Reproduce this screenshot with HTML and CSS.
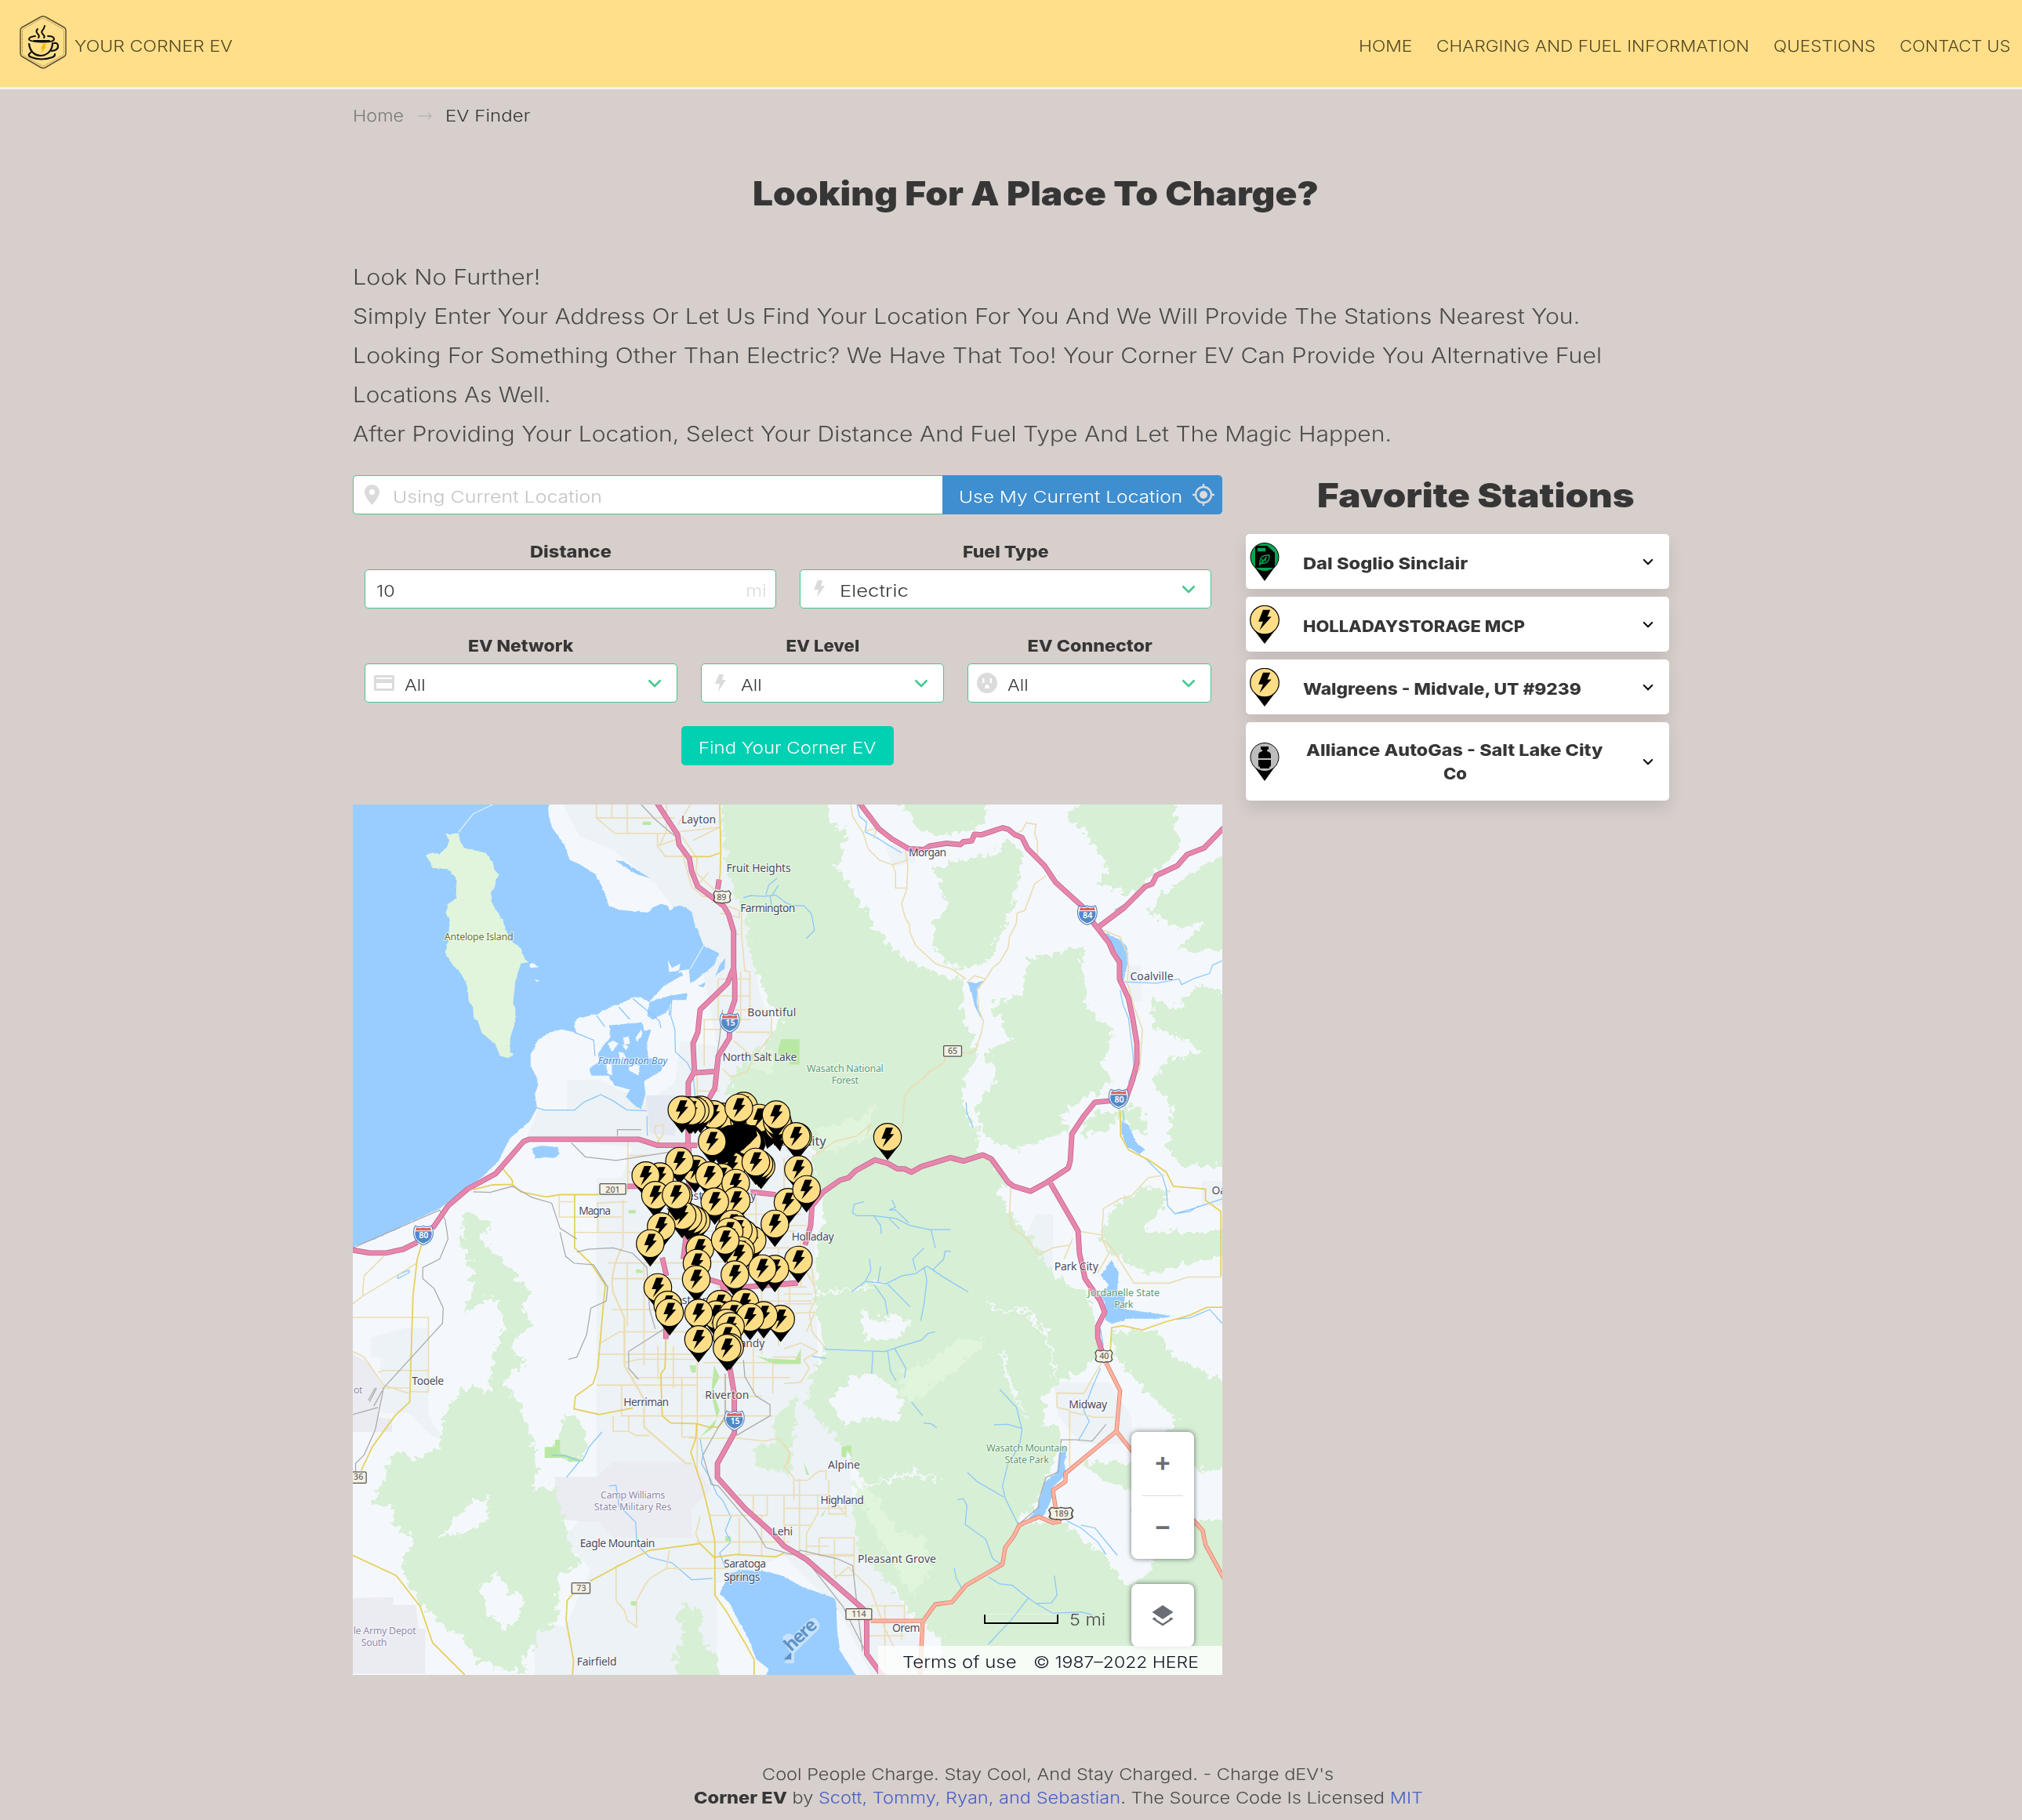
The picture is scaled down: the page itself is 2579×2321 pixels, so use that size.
FILE: index.html
```html
<!DOCTYPE html>
<html lang="en">
<head>
<meta charset="utf-8">
<title>Your Corner EV</title>
<link rel="stylesheet" href="styles.css">
</head>
<body>
<svg width="0" height="0" class="defs">
  <defs>
    <symbol id="bolt" viewBox="0 0 14 22"><path d="M5 0h6L9 7h5L4 22l2-10H0z"/></symbol>
    <symbol id="chev" viewBox="0 0 18 11"><path d="M1.5 1.5 9 9l7.500-7.500" fill="none" stroke="currentColor" stroke-width="2.600"/></symbol>
    <g id="pin"><path d="M-40 36 0 88 40 36z"/><circle r="53" fill="#fedd87" stroke="#000" stroke-width="3.500"/><path d="M-6-37h27L10-12h15L-19 38-6 6h-17z"/></g>
    <g id="interstate"><path d="M-28-34Q-14-26 0-34 14-26 28-34 38-20 33 4 26 26 0 35-26 26-33 4-38-20-28-34z" fill="#fff" stroke="#4d80bd" stroke-width="3"/><path d="M-29-14H29Q32-2 27 8 20 22 0 29-20 22-27 8-32-2-29-14z" fill="#5288c7"/><path d="M-25-28Q-13-22 0-28 13-22 25-28l3 11h-56z" fill="#dc5f62"/></g>
    <g id="usroute"><path d="M-24-22Q-12-16 0-22 12-16 24-22L31-12Q24 0 30 12 24 22 12 20 4 20 0 23-4 20-12 20-24 22-30 12-24 0-31-12z" fill="#f5f1e6" stroke="#4a4a44" stroke-width="3.500"/></g>
  </defs>
</svg>
<header class="navbar">
  <a class="brand">
    <svg class="logo" width="60" height="68" viewBox="0 0 60 68" fill="none" stroke="#111" stroke-linecap="round">
      <path d="M27 1.500Q30 0 33 1.500L57 15Q59 16 59 19V48Q59 51 57 52L33 66Q30 67.500 27 66L3 52Q1 51 1 48V19Q1 16 3 15z" stroke="#5d502f" stroke-width="1.500"/>
      <path d="M27.500 4.200Q30 3 32.500 4.200L55 16.800Q56.500 18 56.500 20V47.500Q56.500 49.500 55 50.500L32.500 63.300Q30 64.500 27.500 63.300L5 50.500Q3.500 49.500 3.500 47.500V20Q3.500 18 5 16.800z" stroke="#8b7846" stroke-dasharray=".5 2" stroke-width="1"/>
      <path d="M23 17q-3 3 0 6t1 5M32 13q-1 4-3 6t1 5 1 4" stroke-width="2"/>
      <path d="M20 26q-8 1-8 4t16 3.500 16-3.500-8-4" stroke-width="2"/>
      <path d="M12 36q1 8 6 12 4 3 9 3t10-4q5-5 5-12M44 35q5-1 5 4t-8 6M14 47q-5 4 1 6 6 2.500 13 2.500T42 53q3-1 3-4" stroke-width="2.200"/>
      <path d="M18 32h20" stroke-width="2"/>
      <path d="M30 36h4l-2 4h2l-7 8 2-6h-2z" fill="#f6b800" stroke="none"/>
    </svg>
    <span class="wide t-brand">YOUR CORNER EV</span>
  </a>
  <nav class="menu"><a class="wide n1">HOME</a><a class="wide n2">CHARGING AND FUEL INFORMATION</a><a class="wide n3">QUESTIONS</a><a class="wide n4">CONTACT US</a></nav>
</header>
<main class="container">
  <div class="breadcrumb"><a class="wide b1">Home</a><svg width="20" height="10" viewBox="0 0 20 10" fill="none" stroke="#b9b5b4" stroke-width="1.300"><path d="M1 5h17M14 1l4 4-4 4"/></svg><span class="wide b2">EV Finder</span></div>
  <h1><span class="wide t-title">Looking For A Place To Charge?</span></h1>
  <div class="intro">
    <p><span class="wide p1">Look No Further!</span></p>
    <p><span class="wide p2">Simply Enter Your Address Or Let Us Find Your Location For You And We Will Provide The Stations Nearest You.</span></p>
    <p><span class="wide p3">Looking For Something Other Than Electric? We Have That Too! Your Corner EV Can Provide You Alternative Fuel</span></p>
    <p><span class="wide p4">Locations As Well.</span></p>
    <p><span class="wide p5">After Providing Your Location, Select Your Distance And Fuel Type And Let The Magic Happen.</span></p>
  </div>
  <div class="columns">
    <section class="finder">
      <div class="search">
        <div class="address"><svg width="19" height="26" viewBox="0 0 19 26" fill="#dbdbdb"><path fill-rule="evenodd" d="M9.500 0A9.500 9.500 0 0 1 19 9.500C19 16 9.500 26 9.500 26S0 16 0 9.500A9.500 9.500 0 0 1 9.500 0zm0 6a3.500 3.500 0 1 0 0 7 3.500 3.500 0 0 0 0-7z"/></svg><span class="wide ph">Using Current Location</span></div>
        <button class="locate"><span class="wide t-loc">Use My Current Location</span><svg width="28" height="28" viewBox="0 0 28 28" fill="none" stroke="#dbdbdb" stroke-width="2.400"><circle cx="14" cy="14" r="10"/><circle cx="14" cy="14" r="5" fill="#dbdbdb" stroke="none"/><path d="M14 0v4M14 24v4M0 14h4M24 14h4"/></svg></button>
      </div>
      <div class="row row-2">
        <label class="field"><b class="wide l1">Distance</b><span class="control"><span class="wide v-10">10</span><em class="wide unit">mi</em></span></label>
        <label class="field"><b class="wide l2">Fuel Type</b><span class="control"><svg class="ic" width="14" height="22"><use href="#bolt"/></svg><span class="wide v v-el">Electric</span><svg class="ch" width="18" height="11"><use href="#chev"/></svg></span></label>
      </div>
      <div class="row row-3">
        <label class="field"><b class="wide l3">EV Network</b><span class="control"><svg class="ic" width="26" height="20" viewBox="0 0 26 20"><path fill-rule="evenodd" d="M2 0h22a2 2 0 0 1 2 2v16a2 2 0 0 1-2 2H2a2 2 0 0 1-2-2V2A2 2 0 0 1 2 0zm1 3v2h20V3zm0 7v7h20v-7z"/></svg><span class="wide v">All</span><svg class="ch" width="18" height="11"><use href="#chev"/></svg></span></label>
        <label class="field"><b class="wide l4">EV Level</b><span class="control"><svg class="ic" width="14" height="22"><use href="#bolt"/></svg><span class="wide v">All</span><svg class="ch" width="18" height="11"><use href="#chev"/></svg></span></label>
        <label class="field"><b class="wide l5">EV Connector</b><span class="control"><svg class="ic" width="26" height="26" viewBox="0 0 26 26"><path fill-rule="evenodd" d="M13 0a13 13 0 1 1 0 26 13 13 0 0 1 0-26zM7 7v6h2.500V7zm9.500 0v6H19V7zM10.500 20h5v-2.500a2.500 2.500 0 0 0-5 0z"/></svg><span class="wide v">All</span><svg class="ch" width="18" height="11"><use href="#chev"/></svg></span></label>
      </div>
      <button class="submit"><span class="wide t-sub">Find Your Corner EV</span></button>
      <div class="map">
<svg class="map-art" viewBox="0 17 3105 3108" preserveAspectRatio="none">
  <defs>
    <filter id="rough" x="-5%" y="-5%" width="110%" height="110%"><feTurbulence type="fractalNoise" baseFrequency=".04" numOctaves="4" seed="4"/><feDisplacementMap in="SourceGraphic" scale="60" xChannelSelector="R" yChannelSelector="G"/></filter>
    <filter id="shore" x="-5%" y="-5%" width="110%" height="110%"><feTurbulence type="fractalNoise" baseFrequency=".07" numOctaves="2" seed="9"/><feDisplacementMap in="SourceGraphic" scale="8" xChannelSelector="R" yChannelSelector="G"/></filter>
    <g id="motorways">
      <path d="M1085 10 1160 125 1165 160 1202 210 1210 255 1232 310 1325 380 1342 410 1360 470V600L1364 650V715L1345 770V850L1305 915 1293 1030 1270 1070M1360 600 1338 655 1240 750 1232 830 1215 870 1220 970 1198 1010 1197 1240M1308 285 1303 320M1220 975 1295 970M285 1530 340 1450 410 1390 510 1335 610 1220 630 1212H1020L1090 1234H1230M0 1608 60 1618H120L180 1605 230 1580M980 1380H1040M1200 1230V1650L1230 1700 1320 1727 1330 1790V1900M1105 1635 1120 1700M1118 1850V1925M1180 1640 1190 1560M1420 1400 1510 1410M1330 1745 1590 1725M1345 2020 1362 2120 1363 2260 1330 2320 1302 2370V2420L1400 2530 1500 2620 1540 2665 1620 2713 1720 2800 1835 2900V3050L1900 3140"/>
      <path d="M1808 10 1880 105 1925 140 1985 175 2040 178 2060 165 2120 155 2170 160 2180 150 2210 147 2220 123 2245 125 2320 100 2340 105 2365 125 2390 135 2410 175 2470 235 2510 295 2615 390 2645 440 2700 510 2715 545 2738 580V640L2770 710 2785 780 2800 870V940L2785 1000 2760 1070 2650 1080 2610 1130 2568 1193 2562 1290 2555 1315 2480 1365 2420 1398 2360 1380 2340 1365 2280 1282 2250 1268 2180 1290 2135 1278 2030 1310 1995 1330 1970 1318H1945L1910 1298 1865 1286 1795 1325 1770 1350 1740 1358 1680 1400 1640 1450 1635 1520 1615 1590M2655 460 2755 385 2830 310 2855 300 2870 270 2945 235 2980 195 3040 172 3110 100M2492 1370 2590 1540 2595 1620 2615 1710 2670 1790 2685 1830 2660 1880V1920L2675 1970"/>
    </g>
    <path id="highways" d="M2690 2010 2740 2110 2727 2255 2545 2405V2435L2500 2465 2510 2530M2727 2255 2790 2335M3000 2570 3035 2610 3045 2660 3110 2780M2530 2575 2500 2582 2450 2560 2380 2590 2360 2630 2330 2670 2320 2730 2250 2770 2190 2805 2140 2865 2080 2873 2060 2900 2035 2935 2025 3140M1850 2932H2035"/>
  </defs>
  <rect y="17" width="3105" height="3108" fill="#f4f8fc"/>
  <g fill="#ecf2f5">
    <path d="M750 17H1320L1400 400 1450 680 1510 850 1340 1010 1640 1260 1650 1600 1660 2000 1640 2180 1760 2280 1800 2600 1980 2900 2090 3125H1850L1740 2900 1540 2700 1300 2800V3125H650V2950H760L850 2750 800 2690 720 2680 870 2500 870 1350H960L1000 1240 620 1210 660 1110H765V1000H880L1050 1080 1150 1010 1170 860 1300 880 1230 500 1080 300 930 180 810 130z"/>
    <path d="M65 1920 190 1885H270V2200L330 2290 280 2270 200 2190H100V1990H65zM620 2700 700 2690V2850H640zM2440 1480H2500V1700H2420L2380 1600zM2500 2080H2700L2780 2200V2300H2600L2520 2200zM2770 590H2815V720H2770zM1900 160 2000 170 2010 220 1930 240zM3030 1360H3105V1450H3030z"/>
  </g>
  <g fill="#ebebf2"><path d="M722 2418H870L930 2365H1210L1280 2460 1210 2530V2635H930L880 2580 722 2570zM0 1980 60 2010 110 2100 90 2205 140 2210V2258H0zM0 2850 145 2848V2875H225L235 2960H258V3120H0z"/><path d="M1045 1055H1165L1150 1200 1060 1190z" fill="#e4e9f1"/></g>
  <g filter="url(#rough)" fill="#d7efd4">
    <path d="M1312-30 1330 200 1360 330 1400 400 1425 560 1480 700 1530 780 1480 860 1350 980 1335 1050 1560 1160 1650 1260 1640 1360 1690 1450 1665 1568 1650 1780 1670 1900 1690 1960 1640 2050 1620 2170 1720 2270 1780 2350 1830 2440 1780 2520 1800 2660 1870 2750 1940 2830 1990 2900 2100 2990V3160H3150V2570H2790V2370L2600 2370 2680 2430 2830 2480 2860 2750 2770 2810 2700 2720 2540 2590 2370 2580 2440 2520 2480 2420 2515 2330 2530 2260 2470 2230V2130L2520 2070 2590 2050 2670 1970 2650 1870 2620 1750 2540 1730 2470 1650 2420 1568 2370 1500 2300 1400 2340 1360 2260 1270 2230 1260 2240 1200 2180 1100 2180 1000 2230 930 2230 880 2180 800V640L2100 630 2020 590 1940 540 1860 450 1790 330 1730 240 1765 110 1705 90 1690-30z"/>
    <path d="M1920-30H2250L2265 80 2160 120 2080 130 2010 100 1990 60zM2340 140 2400 210 2370 300 2350 400 2300 500 2280 560 2190 610 2130 590 2070 520 2080 430 2130 380 2070 250 2140 220 2280 200zM2640-30H2930L2940 110 2960 160 2910 220 2840 280 2800 340 2660 300 2700 240 2630 130 2550 60z"/>
    <path d="M2410 570 2600 530 2610 620 2620 740 2720 830 2670 950 2720 1010 2620 1060 2520 1130 2580 1180 2490 1210 2370 1250 2260 1210 2220 1100 2300 990 2260 910 2350 850 2280 740 2390 690zM3150 170 3020 250 2940 300 2870 360 2840 400 2960 460 3040 440 2940 540 3150 540zM2850 700 2940 750 3020 660 3150 700V1310L2960 1310 2910 1240 2930 1100 2850 1010 2920 920 3040 900 2940 840 2860 820zM2630 1130 2810 1090 2840 1200 2780 1170 2740 1130 2700 1180 2600 1200zM2670 1568 2720 1450 2830 1380 2920 1400 2870 1480 2790 1568 2720 1640z"/>
    <path d="M2720 1540H3150V1620L2920 1670 2850 1700 2750 1640zM2710 1900 2870 1890 2940 2000 3150 2090V2370L3020 2400 2880 2330 2940 2210 2830 2110 2730 2000z"/>
    <path d="M400 1470 490 1510 460 1580 560 1668 640 1770 600 1810 640 1870 560 1950 620 2010 540 2070 600 2170 640 2270 660 2380 640 2470 720 2450 750 2570 770 2630 810 2730 740 2770 730 2940 660 2970 660 3010 600 3070 630 3120 450 3080 400 3000 290 2920 190 2790 180 2720 220 2640 140 2590 150 2520 70 2510 120 2410 130 2330 250 2350 310 2310 330 2170 420 2090 490 2120 500 1990 540 1870 500 1770 390 1840 430 1750 420 1660 390 1600z"/>
    <path d="M750 2200 800 2205 840 2270 830 2340 770 2360 720 2320zM1180 2870 1250 2900 1240 2990 1310 3070 1320 3150H1160L1150 3050 1190 2970 1150 2910zM1590 2110 1510 2210 1520 2290 1430 2320 1440 2380 1560 2410z"/>
  </g>
  <g filter="url(#rough)" fill="#f4f8fc">
    <path d="M1820 1810 1840 1860 1900 1850 1950 1830 1990 1870 1960 1910 1880 1940 1820 1910zM1700 2150 1780 2060 1850 2050 1930 2100 1970 2150 1950 2220 1850 2210 1760 2230zM450 2810 520 2760 560 2830 620 2840 600 2910 540 2960 480 2900zM370 2560 430 2500 490 2500 470 2590 380 2620 300 2640zM2240 950 2290 1010 2240 1030zM2900 880 2960 860 3010 900 2960 930zM3000 580 3105 560 3105 640 2980 650z"/>
    <path d="M2260 1790 2320 1830 2410 1820 2440 1880 2480 1900 2510 2070M2320 1970 2340 2070 2400 2200M1780 2470 1900 2430 2000 2400 2100 2430M1660 1765 1780 1750 1900 1725" fill="none" stroke="#f4f8fc" stroke-width="9"/>
  </g>
  <g filter="url(#rough)" fill="#e1f5dc"><path d="M1960 2050 2060 2000 2160 1930 2260 1930 2180 2010 2090 2080 2020 2140 1960 2130zM1780 2440 1860 2470 1950 2620 2040 2630 2060 2760 2000 2840 1950 2760 1870 2620zM1640 1180 1800 1140 1860 1090 1840 1200 1700 1260zM1410 960 1500 880 1500 980z"/></g>
  <g fill="#99cdff" filter="url(#shore)">
    <path d="M-20 0H696L700 60 712 100 755 160 775 215 810 230 865 265 890 310 915 378 950 393 1055 403 1070 385 1100 372 1125 378 1132 398 1150 382 1180 380 1210 400 1220 440 1253 520 1308 548 1290 590 1230 640 1205 655 1200 605 1170 610 1140 640 1075 690 1040 705 1005 705 950 730 910 745 870 765 800 782 790 810 800 832 745 820 700 832 660 860 635 910V950L655 985 662 1020 650 1050 658 1100 630 1150 560 1210 520 1290 460 1350 420 1380 310 1460 80 1568-20 1605z"/>
    <path d="M915 805 1035 795 1040 825 1065 822 1050 870 1055 920 1110 945 1100 970 1040 1005 1045 1050 1030 1105 1010 1095 975 1060 990 1035 935 1020 915 985 850 985 845 960 880 935 875 905 900 870 920 850zM1050 770 1060 720 1130 700 1195 690 1190 715 1140 715 1120 760 1070 785zM1030 710 1170 615 1180 625 1110 665 1060 720zM640 1245 670 1235 730 1240 738 1260 725 1278 650 1280zM935 215 965 220 1062 280 1010 265zM1295 630 1310 590 1330 565 1328 600zM1235 665 1260 650 1250 670z"/>
    <path d="M1310 2836 1325 2803 1345 2763 1390 2750 1480 2756 1540 2773 1600 2808 1725 2853 1730 2968 1740 3038 1805 3140H1470L1485 3103 1440 3068 1410 2988 1380 2938 1345 2868z"/>
    <path d="M2680 475 2735 495 2762 520 2770 570 2752 650 2735 640 2745 580 2730 550 2700 510zM2745 1145 2770 1160 2795 1220 2830 1250 2810 1265 2765 1240 2745 1190zM2195 650 2230 655 2258 645 2230 675 2228 725 2248 790 2220 735 2210 690zM2670 1698 2710 1643 2735 1688 2730 1748 2760 1763 2750 1818 2930 1843 2880 1853 2770 1853 2710 1871 2688 1858 2685 1788 2670 1773 2700 1733zM2525 2303 2552 2313 2540 2368 2550 2408 2500 2453 2495 2498 2470 2553 2400 2583 2445 2528 2470 2438 2515 2398z"/>
  </g>
  <path filter="url(#shore)" fill="#e1f5dc" d="M330 122 377 120 384 150 397 172 475 190 502 230 505 250 523 268 510 285V308L493 330 495 365 535 430 560 500 600 530 615 570 628 580 600 585 580 650 572 730 581 745 580 795 562 850V905L577 908 555 923 527 915 508 872 460 832 447 790 431 780 430 742 413 715 411 680 403 650 385 620 357 590 330 545 340 500 347 430 332 405 340 372 368 352 371 290 350 255 330 247 283 243 278 225 261 200 270 190 310 192 335 170 345 145z"/>
  <g fill="#f4f8fc" filter="url(#shore)"><path d="M630 590 645 583 662 598 635 600zM650 642 668 646 655 650zM910 870 930 860 948 870 925 900zM965 850 985 845 990 870 970 875zM1010 850 1030 820 1035 840 1015 865zM950 900 970 905 975 935 955 945zM905 940 925 945 925 985 908 975zM990 940 1025 950 1020 985 985 965zM960 875 985 880 975 895zM1125 575 1140 600 1170 585 1165 610 1130 615z"/></g>
  <g fill="#b9e8a4"><path d="M685 2311H722V2285H740V2335L820 2355V2363H768V2350H685zM1530 855H1595V945H1560V915H1520V885zM1035 78H1065V90H1035zM985 1465H1010V1477H985zM1012 1676 1035 1680V1690H1012zM1202 2020H1225V2045H1210zM1480 1995 1580 2000 1600 1960V2015H1500L1440 1985zM1290 2020 1310 2060 1285 2110 1310 2180 1290 2240 1240 2275 1300 2210 1280 2120zM993 2862H1015V2877H993zM1330 2630H1350V2648H1330zM1745 2310 1780 2305V2345L1765 2320 1760 2350 1745 2345zM1610 2365 1630 2410 1620 2410zM1670 2560 1690 2530 1680 2555z"/></g>
  <g fill="none" stroke="#8ac6fb" stroke-width="3.500">
    <path d="M378 115 430 50 500 17M1253 520 1205 605" stroke="#dfeefa"/>
    <path d="M658 1100 685 1108H792L825 1080 885 1053 930 1075 978 1107 1050 1111M790 830 860 858 865 915M1000 710 1095 790 1100 815M1140 700 1135 770 1150 820 1152 900 1195 940 1215 980 1222 1050 1220 1090M950 740 990 785M870 770 900 810M1130 720V770M1050 1130 1052 1200M820 2360 845 2310 890 2257M710 2340 760 2342 810 2362 763 2420M915 2450 940 2448 950 2520 1010 2580 1015 2660 1060 2705 1140 2725 1210 2785 1285 2780M1240 2280 1250 2340 1245 2370 1275 2420 1300 2480 1320 2500 1350 2560 1330 2610 1350 2650 1310 2690 1330 2740M158 1708 165 1695 200 1680 202 1688 160 1710"/>
    <path d="M1395 350 1420 342 1470 345 1510 340 1550 370M1475 340 1485 305 1515 280M1495 345 1520 305M1540 365 1570 378 1610 378 1637 405 1649 465 1620 495M1490 345 1495 375M1800 17 1810 60 1835 80 1830 115 1870 135 1910 160 1960 190M2190 1080 2193 1120 2203 1140 2215 1170M2740 680 2750 730 2770 780 2785 900 2790 960 2770 1010M2750 1110 2755 1150M2755 650 2870 655 2950 640 2960 660 3000 640 3060 620 3070 590 3105 575M2830 1280 2890 1340 2905 1390 2910 1450 2935 1478 3000 1460 3105 1425M2935 1478 2990 1470 3020 1450"/>
    <path d="M1825 1435 1790 1445 1785 1475 1800 1485 1860 1485 1940 1495 1990 1520 2060 1535 2135 1535M1860 1485 1885 1520 1887 1550M1915 1495 1953 1533M1925 1428 1938 1455 1915 1465 1940 1465M1938 1465 1985 1510M2065 1535 2080 1600"/>
    <path d="M1780 1758 1830 1720 1905 1728 1960 1700 2010 1692 2050 1665 2110 1705 2198 1758M1845 1640 1850 1680 1830 1720M1875 1725 1885 1665M1860 1730 1900 1785 1910 1838M1910 1730 1960 1780 1990 1810M2040 1668 2050 1715 2040 1800 2028 1860M2010 1680 2000 1640 2040 1600M2070 1680 2110 1640 2115 1612 2135 1612M1685 1962 1900 1970 1960 1950 2030 1930 2055 1905 2080 1900M1857 1970 1853 2050M1910 1968 1920 2040 1940 2075M1935 1960 1975 2030 1970 2065M1640 1987 1690 1995M1995 2150 2035 2200M2038 2225 2065 2228 2085 2242M2310 2105 2370 2170 2390 2250 2380 2310 2340 2370 2320 2450 2330 2495 2375 2585M2390 2245 2340 2230 2290 2232M2195 2402 2230 2435 2325 2490M2160 2500 2180 2495 2193 2520 2187 2588 2260 2640 2285 2710 2315 2730M2147 2742 2155 2780 2180 2825M2270 2775 2310 2800 2355 2805 2412 2850 2350 2930 2270 3015M2412 2850 2440 2870 2495 2868 2515 2840 2505 2770M2440 2870 2500 2905 2600 2900 2640 2910M2550 2575 2600 2600 2660 2650 2690 2695M2600 2590 2650 2600 2730 2698M2670 1890 2680 1950M2670 2030 2640 2100 2610 2180 2630 2220 2590 2290M2940 1855 2990 1850 3060 1820 3105 1870"/>
  </g>
  <g fill="none" stroke="#ebdcb3" stroke-width="4.500">
    <path d="M870 17V65H1150M925 17V65M980 17V120M870 65 935 120H1160M1088 120V165L1115 202H1210M1090 165 1160 140M1120 17V110L1095 165M1175 130 1230 210 1225 260 1300 330M1205 17 1160 90M1160 115 1310 98M1215 145 1310 98M1165 150 1210 310 1250 345 1310 350M1270 260 1235 300M1388 380V480L1400 610 1418 615V700M1380 480H1370M1340 380 1380 395V420L1310 405M1385 615V790M1305 640H1418V750H1345M1305 700H1418M1305 640V780M1250 785H1420M1250 820H1320M1255 785V950M1450 750 1495 770V840L1440 910H1400M1370 830H1490M1360 860 1430 920 1410 970 1350 990 1320 960M1230 970V1180M1230 1040H1310"/>
    <path d="M1080 1165 1110 1160V1190L1095 1215 1078 1190zM982 1220V1400M870 1440 980 1435M980 1330H1000M965 1430V1600M737 1415V1490H960M740 1435H790M982 1270H1060M790 1545H1080M875 1440V1545M1440 1420V1568M1380 1480H1600M1540 1280V1400M1510 1460H1600M1450 1520H1620"/>
    <path d="M910 1654H1200M925 1710H1200M925 1820H1200M970 1880V2020M980 1650V1880M1040 1650V2020M880 1943 950 1900H1190M875 1980H1250M970 2010 1020 1998H1230M1000 2063H1230M870 2090H1230M1090 1950V2070M1145 1950V2100M1230 1950V2400M1175 2060V2275H1230M960 2090V2200H1300M930 2200V2255H985L1010 2270H1060M1230 2063H1560M1250 2010H1500V2120M1250 2130H1460M1270 2200H1500M1330 2050V2200M1500 1990H1600M1430 1950V2120M985 2200V2255M1200 2280H1380L1470 2290 1520 2280 1560 2330 1550 2370M1170 1540H1580M1180 1600H1600M1250 1650H1600M1340 1690V1960M1400 1600V1920M1460 1700V1980M1520 1600V1950M1300 1740H1620M1400 1790H1640M1560 1600V1850"/>
    <path stroke-width="6" d="M960 1600Q915 1690 930 1760L970 1850V2020L1040 2140V2240L1190 2370H1210"/>
    <path d="M1600 1568V1740M1540 1765H1640M1540 1835 1650 1830 1620 1900M1610 1580 1640 1680 1655 1780 1630 1830 1640 1900 1690 1960M1600 1650 1650 1740M1540 1800H1640M1540 1960 1600 1940 1660 1970 1610 2000 1630 2030 1600 2080 1540 2085M1540 2300 1560 2330 1555 2370 1540 2380 1575 2420V2500"/>
    <path d="M1375 2483H1620M1430 2483V2555M1480 2483V2555H1270M1240 2560 1225 2620 1240 2660M1225 2650H1560M1380 2560V2700M1460 2555V2700M1540 2483V2650M1540 2530H1760M1540 2590H1640M1595 2425V2700M1540 2483H1700L1765 2560M1580 2430H1625L1660 2400 1690 2395V2430M1660 2483V2550L1620 2620V2700M1700 2430V2550H1760V2483M1665 2635H1790V2770H1720V2640M1665 2635V2700H1790M1620 2665H1700M1720 2780 1770 2740 1800 2770 1850 2820 1900 2960 1950 3060 2000 3125M1540 2695H1790M1850 2878H1970V2950M1840 2985H1970M1840 2878V3060M1900 2880V3125M1960 2930V3000"/>
    <path d="M940 2860V2740L950 2730M940 2860 970 2895 980 2930 1013 2954V2860L1040 2810 1060 2780 1120 2745H1340M1130 2680 1120 2745M0 1848H270V2115L205 2113M100 2100H200M90 2045 110 2038H270M0 1970 40 1990 110 2090 200 2120M35 1773 40 1700 110 1630M0 1800 35 1773 228 1655"/>
    <path d="M1778 17 1785 60 1823 120 1840 175 1880 215 1927 232 1938 260V315H1975M1823 115 1870 100 1860 140M1975 185 1982 240 1978 320 1960 370 1972 420 1987 445 1990 475 2010 520 2080 585 2140 605 2190 640M1927 232 1980 215 1970 160M2370 120 2390 110 2405 82 2440 88 2435 120 2445 150V210L2490 260 2500 280M2475 272 2435 300 2400 395 2372 405 2370 440 2345 490 2340 530 2310 580 2285 600 2260 640 2230 675M2195 650 2220 628 2260 640M2230 675 2235 750 2252 790 2245 830 2225 890 2210 903H2170M2115 920 2110 940 2060 970 2030 1000 1990 1030 1970 1060 1965 1150 1955 1180M1640 1275 1680 1250 1720 1220 1800 1200 1850 1160 1835 1200M2665 460 2740 490 2765 550 2770 600 2765 650 2790 740 2820 820 2810 960 2780 1010M2350 1380 2345 1480 2355 1530 2400 1560 2450 1625 2500 1600 2560 1590M2900 1340 2840 1350 2780 1415 2740 1425 2680 1460 2675 1568 2700 1620 2660 1690M2590 1540 2680 1555M2540 1640 2570 1568M2675 1568 2710 1600 2790 1726H2915L2985 1704H3105M2680 2000 2650 2050 2610 2120 2515 2118V2170L2560 2180 2560 2380M2560 2185 2650 2205H2720"/>
  </g>
  <g fill="none" stroke="#e6cf5f" stroke-width="5"><path d="M1310 17 1314 180 1312 260 1308 300M1205 203H1275L1310 190M430 1392 500 1375 570 1373 600 1400 690 1418 740 1410H880M792 1410V1600L850 1655 902 1733 895 1800 875 2030 858 2085 795 2130 790 2175 880 2195 1000 2172M530 1310 570 1360V1375M1095 1240 1090 1215M245 1590 230 1640 215 1770 203 2150 150 2200 70 2310 30 2395M0 2698 155 2770 240 2880 285 3010 400 3125M785 3125 788 3070 762 2930 765 2860 790 2830M848 2790 940 2740 1060 2680 1240 2656 1290 2705 1370 2695 1510 2703 1540 2690M1118 1925 1115 2030 1100 2050 1105 2200 1135 2225 1230 2228 1270 2240 1305 2240 1360 2180M1228 2228 1225 2280 1207 2330 1250 2460 1275 2560 1293 2650V2840L1335 2900 1400 3010 1433 3070V3125M2740 1110 2742 1200 2770 1250 2840 1285 2870 1305 2905 1330 2930 1380 3045 1390V1430L3100 1470V1700M3105 1812H3050L2990 1840 2900 1865 2820 1893 2750 1878 2710 1885 2705 1970"/></g>
  <g fill="none" stroke="#a9a9ab" stroke-width="3.500"><path d="M1030 17 1080 70 1150 130M1320 750 1310 850 1290 980M0 1600 310 1465 330 1500 340 1568 335 1580 310 1640 250 1670V1710L290 1745 323 1815 320 1870 110 2100 80 2250 40 2340 10 2370 10 2400M0 2195 90 2170M60 2150 85 2100M75 2165 105 2110M55 2145 80 2100M780 1225 830 1275 940 1288 1120 1260 1230 1230M945 1200V1178H1030M430 1400 490 1402 570 1380 640 1420 710 1440 740 1530 800 1568M740 1545 760 1630 790 1655 860 1660 910 1740 905 1790 850 1815 835 1910 800 1990 770 1998M800 1615 840 1605 930 1600 1000 1620 1050 1670 1060 1820 1080 1890M1110 1890 985 1970V2030L1020 2070M1330 2050V2200L1300 2250 1250 2340 1280 2445 1305 2450 1440 2610 1475 2670 1568 2695 1600 2680 1730 2710 1785 2735 1800 2870 1820 3040M1395 2000 1400 2060 1440 2130 1490 2160 1490 2200 1370 2270M1640 2740 1750 2880 1830 3040M2690 2230 2640 2290 2580 2285 2530 2285 2520 2400 2475 2420 2450 2500 2450 2525 2375 2590M2720 395 2762 370"/></g>
  <g fill="none" stroke-linejoin="round">
    <use href="#motorways" stroke="#c9628f" stroke-width="19"/><use href="#motorways" stroke="#e687ae" stroke-width="14.500"/>
    <use href="#highways" stroke="#dd8068" stroke-width="15"/><use href="#highways" stroke="#ffb3a1" stroke-width="10.500"/>
  </g>
  <g class="shields">
    <use href="#interstate" x="1346" y="797"/><text x="1348" y="808">15</text>
    <use href="#interstate" x="252" y="1555"/><text x="253" y="1566">80</text>
    <use href="#interstate" x="2623" y="412"/><text x="2624" y="424">84</text>
    <use href="#interstate" x="2735" y="1068"/><text x="2737" y="1080">80</text>
    <use href="#interstate" x="1363" y="2217"/><text x="1365" y="2228">15</text>
  </g>
  <g class="routes">
    <use href="#usroute" x="1319" y="347"/><text x="1317" y="358">89</text>
    <use href="#usroute" x="2682" y="1987"/><text x="2683" y="1998">40</text>
    <use href="#usroute" transform="translate(2529 2549) scale(1.400 1)"/><text x="2530" y="2560">189</text>
    <g fill="#f5f1e6" stroke="#555550" stroke-width="3.500"><rect x="882" y="1371" width="93" height="38" rx="3"/><rect x="2110" y="878" width="64" height="38" rx="3"/><rect x="-15" y="2400" width="63" height="40" rx="3"/><rect x="782" y="2796" width="65" height="38" rx="3"/><rect x="1761" y="2889" width="92" height="38" rx="3"/></g>
    <text x="928" y="1402">201</text><text x="2142" y="908">65</text><text x="20" y="2429">36</text><text x="816" y="2826">73</text><text x="1807" y="2919">114</text>
  </g>
  <g class="towns">
    <text x="1173" y="84" textLength="124">Layton</text><text x="1334" y="258" textLength="230">Fruit Heights</text><text x="1384" y="402" textLength="196">Farmington</text><text x="1409" y="772" textLength="174">Bountiful</text><text x="1320" y="933" textLength="266">North Salt Lake</text><text x="807" y="1481" textLength="114">Magna</text><text x="1985" y="202" textLength="135">Morgan</text><text x="2776" y="643" textLength="154">Coalville</text><text x="3067" y="1410">Oa</text><text x="1567" y="1574" textLength="151">Holladay</text><text x="2505" y="1679" textLength="157">Park City</text><text x="2557" y="2173" textLength="137">Midway</text><text x="211" y="2089" textLength="114">Tooele</text><text x="967" y="2165" textLength="162">Herriman</text><text x="1258" y="2139" textLength="157">Riverton</text><text x="1361" y="1954" textLength="110">Sandy</text><text x="1697" y="2389" textLength="114">Alpine</text><text x="1670" y="2516" textLength="155">Highland</text><text x="1497" y="2628" textLength="74">Lehi</text><text x="811" y="2668" textLength="268">Eagle Mountain</text><text x="1803" y="2724" textLength="280">Pleasant Grove</text><text x="1325" y="2742" textLength="151">Saratoga</text><text x="1325" y="2788" textLength="129">Springs</text><text x="800" y="3091" textLength="142">Fairfield</text><text x="1926" y="2970" textLength="100">Orem</text><text x="1410" y="1235" textLength="280" font-size="46">Salt Lake City</text><text x="1160" y="1427" textLength="280">West Valley City</text><text x="1120" y="1800" textLength="210">West Jordan</text>
  </g>
  <g class="areas">
    <g fill="#6e7527"><text x="450" y="501" textLength="246">Antelope Island</text></g>
    <g fill="#5e9a74"><text x="1758" y="971" textLength="274">Wasatch National</text><text x="1758" y="1014" textLength="96">Forest</text><text x="2753" y="1773" textLength="257">Jordanelle State</text><text x="2753" y="1816" textLength="68">Park</text><text x="2407" y="2327" textLength="290">Wasatch Mountain</text><text x="2407" y="2370" textLength="158">State Park</text></g>
    <g fill="#9089ab"><text x="1000" y="2494" textLength="230">Camp Williams</text><text x="1000" y="2536" textLength="276">State Military Res</text><text x="114" y="2979" textLength="224">le Army Depot</text><text x="76" y="3021" textLength="92">South</text><text x="19" y="2120" textLength="32">ot</text></g>
    <g fill="#4b89cd" font-style="italic"><text x="1000" y="944" textLength="248">Farmington Bay</text></g>
  </g>
  <g transform="translate(1583 2996) rotate(-44)"><path d="M-92 32H-50Q-40-38-26-38 0-38 0-16H80Q104-16 100 8 96 32 74 32H-40L-66 58z" fill="#c8e2fb"/><text class="here" x="-46" y="22" textLength="134">here</text><path d="M-82 22H-46L-64 42z" fill="#5f93c8"/></g>
  <g transform="translate(952 1008) scale(.9333)">
    <use href="#pin" x="475" y="92"/><use href="#pin" x="268" y="110"/><use href="#pin" x="390" y="133"/><use href="#pin" x="360" y="124"/><use href="#pin" x="310" y="107"/><use href="#pin" x="290" y="110"/><use href="#pin" x="275" y="110"/><use href="#pin" x="478" y="145"/><use href="#pin" x="535" y="138"/><path d="M370 185 415 165H520L545 190 560 240 540 290 470 330 400 320 350 280z"/><path d="M545 190H640L615 265 590 235 565 255z"/><use href="#pin" x="610" y="170"/><use href="#pin" x="604" y="150"/><use href="#pin" x="600" y="125"/><use href="#pin" x="457" y="99"/><use href="#pin" x="239" y="107"/><use href="#pin" x="682" y="210"/><use href="#pin" x="676" y="208"/><use href="#pin" x="490" y="225"/><path d="M385 190 455 152 520 170 528 205 500 235 440 285 405 240z"/><use href="#pin" x="355" y="228"/><use href="#pin" x="430" y="320"/><path d="M385 275 410 245 450 265 425 300 390 318 370 300z"/><use href="#pin" x="542" y="322"/><use href="#pin" x="534" y="314"/><use href="#pin" x="522" y="306"/><use href="#pin" x="685" y="335"/><use href="#pin" x="290" y="335"/><use href="#pin" x="230" y="303"/><use href="#pin" x="155" y="362"/><use href="#pin" x="101" y="358"/><use href="#pin" x="392" y="365"/><use href="#pin" x="345" y="358"/><use href="#pin" x="445" y="387"/><use href="#pin" x="645" y="460"/><use href="#pin" x="716" y="411"/><use href="#pin" x="225" y="435"/><use href="#pin" x="138" y="433"/><use href="#pin" x="447" y="455"/><use href="#pin" x="365" y="458"/><use href="#pin" x="294" y="532"/><use href="#pin" x="280" y="525"/><use href="#pin" x="262" y="517"/><use href="#pin" x="240" y="510"/><path d="M180 480 215 500 255 480 235 520 215 530z"/><use href="#pin" x="217" y="432"/><use href="#pin" x="160" y="553"/><use href="#pin" x="595" y="543"/><use href="#pin" x="118" y="618"/><use href="#pin" x="433" y="543"/><use href="#pin" x="508" y="605"/><use href="#pin" x="475" y="580"/><use href="#pin" x="455" y="565"/><use href="#pin" x="420" y="573"/><use href="#pin" x="308" y="638"/><use href="#pin" x="464" y="645"/><use href="#pin" x="458" y="660"/><use href="#pin" x="405" y="605"/><use href="#pin" x="297" y="693"/><use href="#pin" x="685" y="681"/><use href="#pin" x="595" y="716"/><use href="#pin" x="547" y="714"/><use href="#pin" x="442" y="737"/><use href="#pin" x="294" y="755"/><use href="#pin" x="147" y="786"/><use href="#pin" x="385" y="850"/><use href="#pin" x="480" y="845"/><use href="#pin" x="185" y="853"/><use href="#pin" x="192" y="882"/><use href="#pin" x="370" y="890"/><use href="#pin" x="303" y="884"/><use href="#pin" x="435" y="890"/><use href="#pin" x="617" y="907"/><use href="#pin" x="552" y="893"/><use href="#pin" x="500" y="900"/><use href="#pin" x="410" y="922"/><use href="#pin" x="425" y="935"/><use href="#pin" x="303" y="985"/><use href="#pin" x="412" y="975"/><use href="#pin" x="422" y="1015"/><use href="#pin" x="412" y="1018"/><use href="#pin" x="1026" y="211"/>
  </g>
</svg>
        <div class="panel zoom"><i>+</i><hr><i>−</i></div>
        <div class="panel layers"><svg width="28" height="27" viewBox="0 0 28 27" fill="#6a6d74"><path d="M14 0 27.500 9 14 18 .5 9z"/><path d="M3.500 15.500.5 17.500 14 26.500l13.500-9-3-2-2.500 1.700 1 .6L14 23.500l-9-5.800 1-.5z"/></svg></div>
        <div class="scale"><span class="bar"></span><span class="wide t-5">5 mi</span></div>
        <div class="legal"><span class="wide t-terms">Terms of use</span><span class="wide t-copy">© 1987–2022 HERE</span></div>
      </div>
    </section>
    <aside class="favorites">
      <h2><span class="wide t-fav">Favorite Stations</span></h2>
      <div class="card"><svg class="mk" width="38" height="49" viewBox="0 0 38 49"><path d="M6 31 19 49 32 31z"/><circle cx="19" cy="18.500" r="18" fill="#00a651" stroke="#000"/><path d="M10 4h12l10 9v19H7V7q0-3 3-3z"/><path d="M10.500 7.500h9v3h-9zM27 4l5 5" fill="#00a651" stroke="#00a651" stroke-width="1.300"/><path d="M13 28q-1-13 12-12 0 12-10 10M12 29l10-11M16 21v5M20 19v5" fill="none" stroke="#00a651" stroke-width="1.500"/></svg><b class="wide c1">Dal Soglio Sinclair</b><svg class="cv" width="14" height="9" viewBox="0 0 18 11"><use href="#chev"/></svg></div>
      <div class="card"><svg class="mk" width="38" height="49" viewBox="-54 -54 108 142"><use href="#pin"/></svg><b class="wide c2">HOLLADAYSTORAGE MCP</b><svg class="cv" width="14" height="9" viewBox="0 0 18 11"><use href="#chev"/></svg></div>
      <div class="card"><svg class="mk" width="38" height="49" viewBox="-54 -54 108 142"><use href="#pin"/></svg><b class="wide c3">Walgreens - Midvale, UT #9239</b><svg class="cv" width="14" height="9" viewBox="0 0 18 11"><use href="#chev"/></svg></div>
      <div class="card tall"><svg class="mk" width="38" height="49" viewBox="0 0 38 49"><path d="M6 31 19 49 32 31z"/><circle cx="19" cy="18.500" r="18" fill="#bdbdbd" stroke="#000"/><path d="M14 5h10v4h-2v2q5 1 5 5v4H11v-4q0-4 5-5V9h-2zM11 22h16v7q0 2-2 2v2H13v-2q-2 0-2-2z"/></svg><b class="wrap"><span class="wide c4">Alliance AutoGas - Salt Lake City</span><br><span class="wide c5">Co</span></b><svg class="cv" width="14" height="9" viewBox="0 0 18 11"><use href="#chev"/></svg></div>
    </aside>
  </div>
</main>
<footer>
  <p><span class="wide f1">Cool People Charge. Stay Cool, And Stay Charged. - Charge dEV's</span></p>
  <p><span class="wide f2"><strong>Corner EV</strong> by <a>Scott, Tommy, Ryan, and Sebastian</a>. The Source Code Is Licensed <a>MIT</a></span></p>
</footer>
</body>
</html>
```
FILE: styles.css
```css
* { box-sizing: border-box; }
body { margin: 0; background: #d7cfcc; color: #4a4a4a; font: 300 20.5px/30px Inter, "Liberation Sans", sans-serif; white-space: nowrap; }
.defs { position: absolute; }
button { border: 0; font: inherit; color: #fff; }
b, strong { font-weight: 800; color: #363636; }

/* extended letterforms: --w is the horizontal stretch */
.wide { display: inline-block; transform: scaleX(var(--w, 1.14)); transform-origin: left center; }

.navbar { height: 114px; padding: 0 15px 0 25px; display: flex; justify-content: space-between; background: #ffdf89; border-bottom: 3px solid #f3f1f0; }
.brand { display: flex; gap: 10px; padding-top: 20px; color: #524722; }
.brand span { padding-top: 24px; --w: 1.13; }
.menu { display: flex; gap: 31px; padding-top: 44px; color: #524722; }
.n1 { width: 68px; --w: 1.115; }
.n2 { width: 399px; --w: 1.102; }
.n3 { width: 130px; --w: 1.102; }
.n4 { width: 141px; --w: 1.068; }

.container { width: 1679px; margin: 0 auto; }
.breadcrumb { display: flex; align-items: center; gap: 16px; padding-top: 19px; color: #7d7978; }
.breadcrumb span { color: #363636; --w: 1.174; }
.b1 { width: 66px; --w: 1.14; }
h1, h2 { margin: 0; font-size: 42px; line-height: 50px; font-weight: 900; color: #363636; text-align: center; }
h1 span, h2 span, .field b, .submit span, .c4, .c5, footer span { transform-origin: center; }
h1 { padding-top: 59px; }
.t-title { --w: 1.097; }
.t-fav { --w: 1.128; }
.intro { padding-top: 56px; font-size: 26.5px; line-height: 50px; }
.intro p { margin: 0; height: 50px; }
.p1 { --w: 1.155; }
.p2 { --w: 1.14; }
.p3 { --w: 1.145; }
.p4 { --w: 1.12; }
.p5 { --w: 1.136; }

.columns { display: flex; gap: 30px; padding-top: 28px; align-items: flex-start; }
.finder { width: 1109px; display: flex; flex-direction: column; }
.search { display: flex; height: 50px; }
.address { flex: 1; display: flex; align-items: center; gap: 17px; padding-left: 14px; background: #fff; border: 1px solid #48c78e; border-right: 0; border-radius: 5px 0 0 5px; color: #c3c3c3; }
.address span, .locate span, .submit span { padding-top: 6px; }
.ph { --w: 1.214; }
.t-loc { --w: 1.197; }
.t-sub { --w: 1.165; }
.locate { width: 357px; display: flex; align-items: center; justify-content: space-between; padding: 0 10px 0 21px; background: #3e8ed0; border-radius: 0 5px 5px 0; }
.row { display: flex; gap: 30px; padding: 34px 14px 0 15px; }
.row-2 .field { width: 525px; }
.row-3 .field { width: 311px; }
.row-3 .field:first-child { width: 399px; }
.field { display: flex; flex-direction: column; gap: 6px; align-items: center; }
.field b { position: relative; top: -1px; }
.l1 { --w: 1.156; }
.l2 { --w: 1.122; }
.l3 { --w: 1.117; }
.l4 { --w: 1.08; }
.l5 { --w: 1.136; }
.control { width: 100%; height: 50px; display: flex; align-items: center; padding: 6px 14px 0; background: #fff; border: 1px solid #48c78e; border-radius: 5px; color: #363636; box-shadow: inset 0 1px 2px rgba(10,10,10,.05); }
.control .ic { margin: -7px 13px 0 -3px; fill: #dbdbdb; }
.control .ic[width="14"] { margin: -7px 19px 0 3px; }
.v-el { --w: 1.25; }
.ch { margin: -5px 5px 0 auto; color: #48c78e; }
.unit { margin-left: auto; font-style: normal; color: #dbdbdb; margin-right: -3px; transform-origin: right center; --w: 1.17; }
.submit { align-self: center; width: 271px; height: 50px; margin-top: 30px; border-radius: 5px; background: #00d1b2; display: flex; align-items: center; justify-content: center; }

.map { position: relative; width: 1109px; height: 1110px; margin-top: 50px; overflow: hidden; }
.map-art { display: block; width: 100%; height: 100%; font-family: "Noto Sans", sans-serif; font-weight: 400; }
.map-art text { paint-order: stroke; stroke: rgba(255,255,255,.7); stroke-width: 6px; stroke-linejoin: round; }
.towns { font-size: 39px; fill: #4b4b5e; }
.areas { font-size: 35px; text-anchor: middle; }
.shields, .routes { font-size: 30px; text-anchor: middle; font-weight: 600; }
.map-art .shields text { fill: #fff; stroke: none; }
.map-art .routes text { fill: #66665c; stroke: none; font-weight: 500; }
.map-art .here { font: 700 64px "Open Sans", sans-serif; fill: #5f93c8; stroke: none; }
.panel { position: absolute; left: 993px; width: 80px; background: #fff; border-radius: 8px; box-shadow: 0 0 6px rgba(15,22,33,.6); display: flex; flex-direction: column; align-items: center; justify-content: center; color: #6a6d74; }
.zoom { top: 800px; height: 162px; justify-content: space-between; }
.zoom i { height: 80px; font: 600 34px/75px Inter, sans-serif; }
.zoom hr { width: 52px; height: 1px; border: 0; margin: 0; background: #ddd; flex: none; }
.layers { top: 994px; height: 80px; }
.scale { position: absolute; left: 805px; top: 1026px; display: flex; gap: 14px; }
.bar { width: 95px; height: 12px; margin-top: 7px; border: solid #000; border-width: 0 2px 2px; box-shadow: 0 0 2px #fff; }
.t-5 { margin-top: -1px; }
.legal { position: absolute; right: 0; bottom: 0; width: 439px; height: 37px; padding: 6px 0 0 31px; display: flex; gap: 20px; background: rgba(255,255,255,.8); color: #0f1621; }
.t-terms { width: 147px; --w: 1.168; }
.t-copy { --w: 1.122; }

.favorites { width: 540px; display: flex; flex-direction: column; gap: 10px; }
.favorites h2 { padding: 1px 0 14px; height: 65px; }
.card { height: 70px; display: flex; align-items: center; background: #fff; border-radius: 5px; padding: 0 20px 0 5px; box-shadow: 0 10px 20px rgba(10,10,10,.1); color: #000; }
.card b { margin-left: 30px; padding-top: 5px; }
.card .mk { flex: none; }
.card .cv { margin-left: auto; }
.c1 { --w: 1.154; }
.c2 { --w: 1.068; }
.c3 { --w: 1.11; }
.c4 { --w: 1.138; }
.c5 { --w: 1.08; }
.card.tall { height: 100px; }
.card .wrap { width: 387px; text-align: center; padding-top: 2px; }

footer { text-align: center; padding-top: 112px; }
footer p { margin: 0; height: 30px; }
footer a { color: #485fc7; }
.f1 { --w: 1.148; }
.f2 { --w: 1.15; }
```
